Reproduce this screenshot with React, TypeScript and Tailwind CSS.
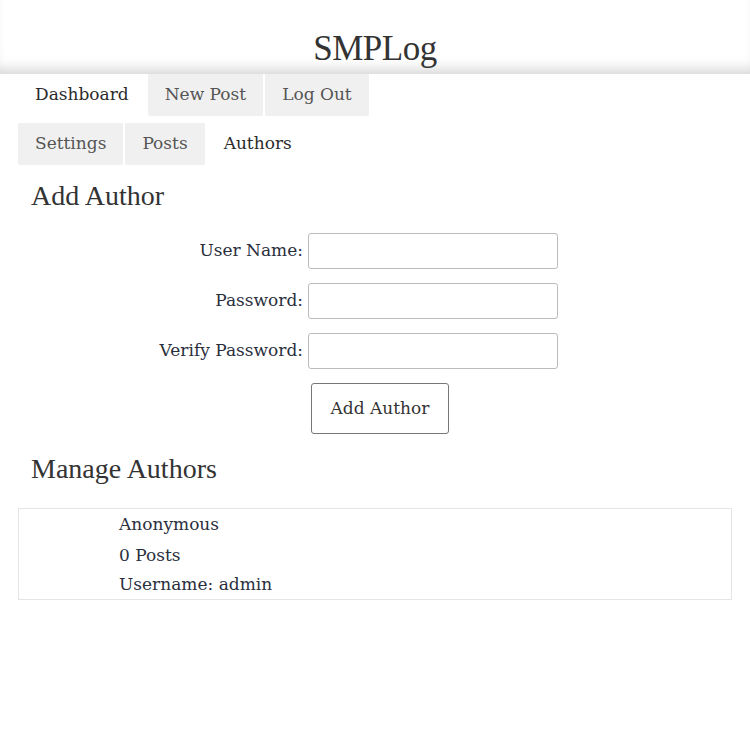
import React from 'react';

const body = "font-['DejaVu_Serif',serif]";
const slab = "font-['Liberation_Serif',serif]";

const topTabs = [
  { label: 'Dashboard', active: true },
  { label: 'New Post', active: false },
  { label: 'Log Out', active: false },
];

const subTabs = [
  { label: 'Settings', active: false },
  { label: 'Posts', active: false },
  { label: 'Authors', active: true },
];

const fields = ['User Name:', 'Password:', 'Verify Password:'];

function Tab({ label, active }: { label: string; active: boolean }) {
  return (
    <div
      className={
        'h-[42px] flex items-center px-[17px] rounded-b-[2px] ' +
        (active ? 'bg-white text-[#2b2b2b]' : 'bg-[#f0f0f0] text-[#555]')
      }
    >
      {label}
    </div>
  );
}

export default function App() {
  return (
    <div className={`min-h-[750px] bg-white text-[17px] text-[#333] ${body}`}>
      <header className="h-[74px] flex items-end justify-center pb-[8px] shadow-[inset_0_-12px_14px_-8px_rgba(0,0,0,0.18)]">
        <h1 className={`text-[35px] leading-none text-[#333] tracking-[-0.5px] ${slab}`}>SMPLog</h1>
      </header>

      <nav className="px-[18px]">
        <div className="flex gap-[2px]">
          {topTabs.map((t) => (
            <Tab key={t.label} {...t} />
          ))}
        </div>
        <div className="flex gap-[2px] mt-[7px]">
          {subTabs.map((t) => (
            <Tab key={t.label} {...t} />
          ))}
        </div>
      </nav>

      <section className="px-[18px]">
        <h2 className={`text-[28px] leading-none pl-[13px] mt-[17px] text-[#333] ${slab}`}>Add Author</h2>

        <div className="grid grid-cols-[285px_250px] gap-x-[5px] gap-y-[14px] mt-[23px]">
          {fields.map((f) => (
            <React.Fragment key={f}>
              <label className="text-right self-center text-[#2a2f3d]">{f}</label>
              <input
                type={f === 'User Name:' ? 'text' : 'password'}
                className="h-[36px] border border-[#bbb] rounded-[3px] bg-white outline-none px-2"
              />
            </React.Fragment>
          ))}
        </div>

        <div className="flex justify-center pl-[10px] mt-[14px]">
          <button className="h-[51px] px-[19px] border border-[#777] rounded-[3px] bg-white text-[#333]">
            Add Author
          </button>
        </div>

        <h2 className={`text-[28px] leading-none pl-[13px] mt-[21px] text-[#333] ${slab}`}>Manage Authors</h2>

        <div className="mt-[25px] border border-[#e5e5e5] pl-[100px] flex flex-col text-[#2a2f3d]">
          <div className="h-[31px] flex items-center">Anonymous</div>
          <div className="h-[31px] flex items-center">0 Posts</div>
          <div className="h-[28px] flex items-center">Username: admin</div>
        </div>
      </section>
    </div>
  );
}
